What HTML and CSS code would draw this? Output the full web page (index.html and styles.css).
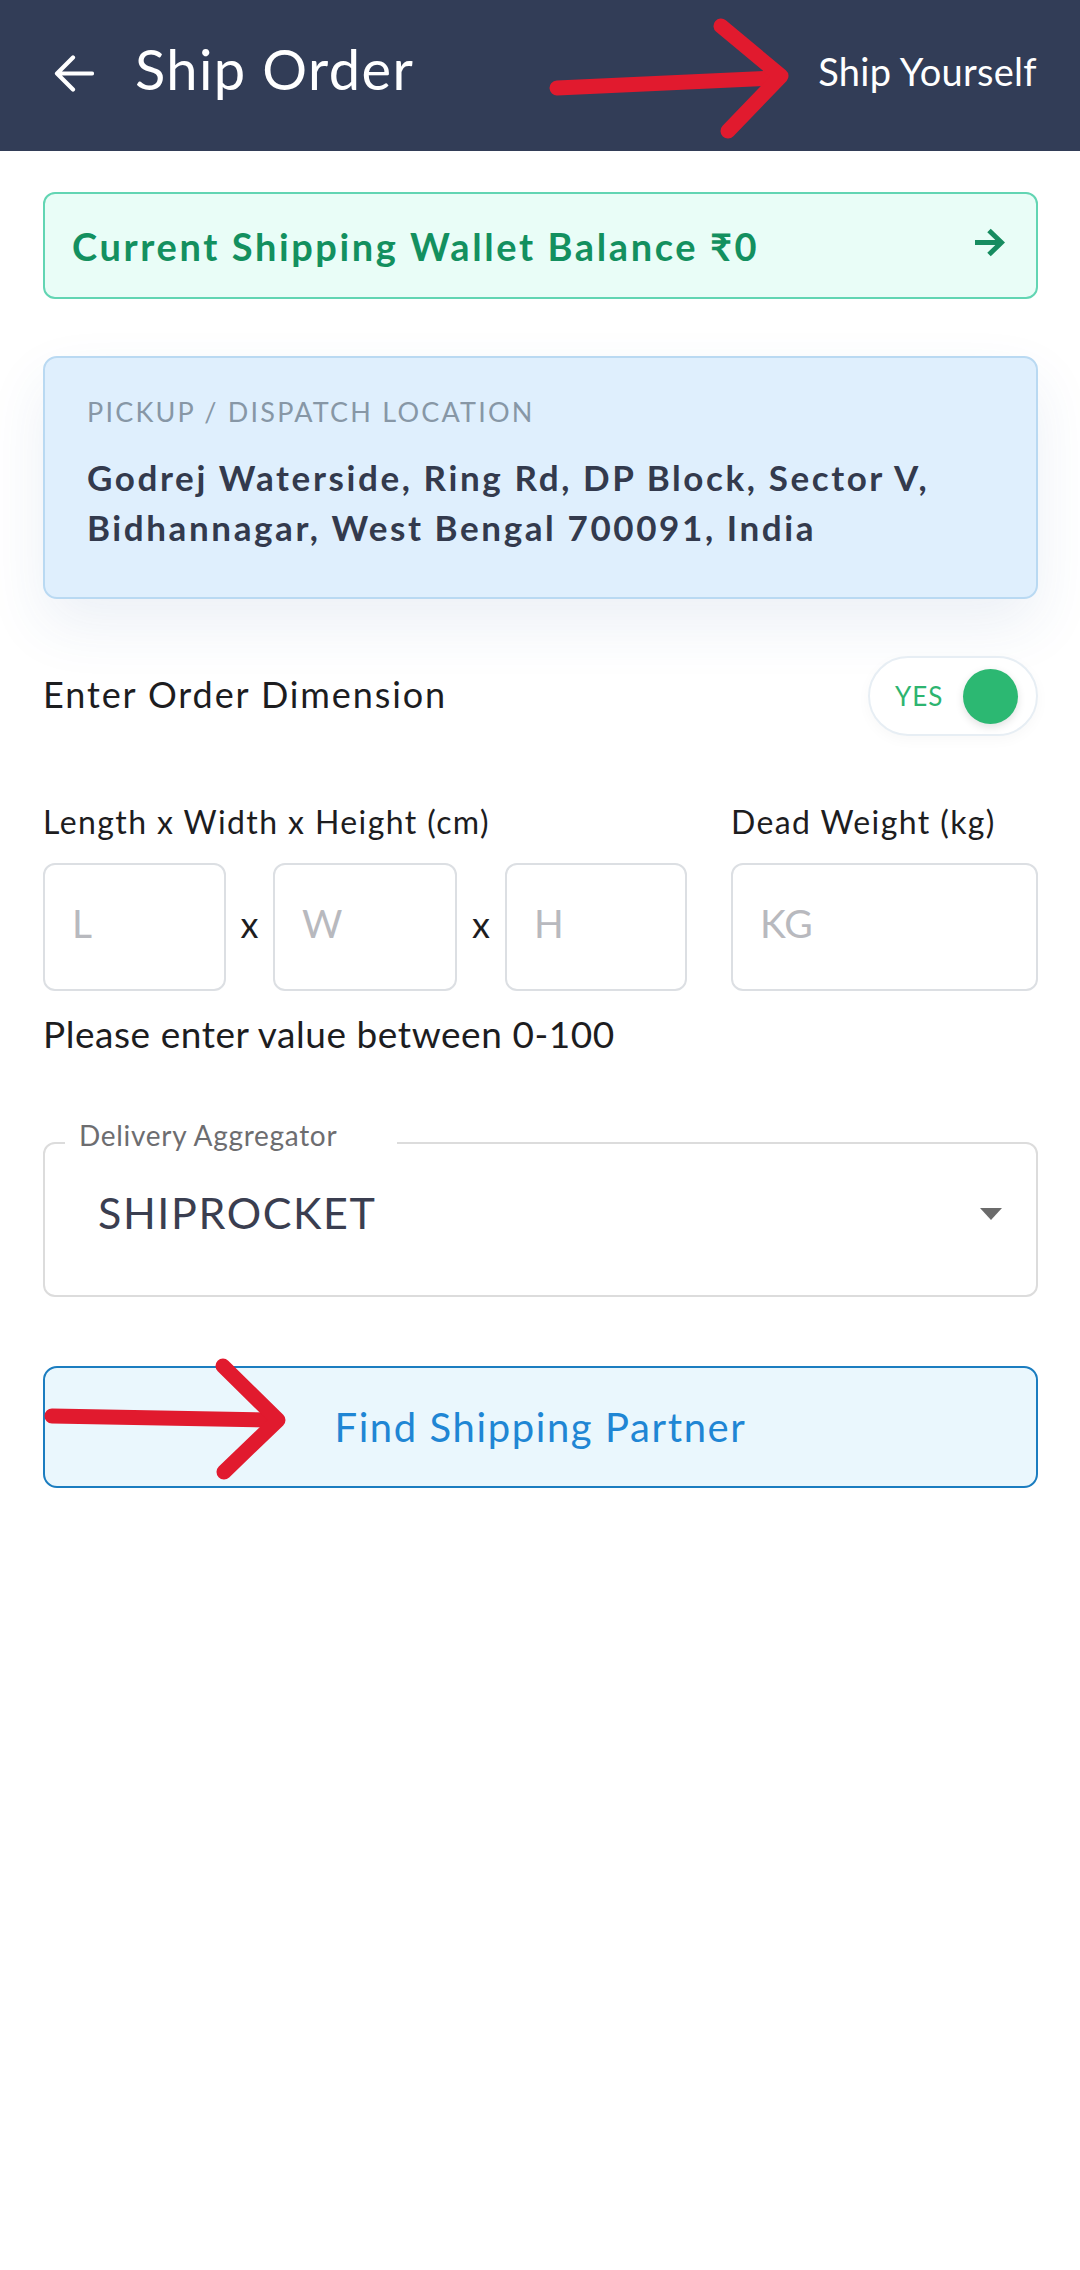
FILE: index.html
```html
<!DOCTYPE html>
<html lang="en">
<head>
<meta charset="utf-8">
<title>Ship Order</title>
<link rel="stylesheet" href="styles.css">
</head>
<body>
<div class="screen">
  <header class="appbar">
    <svg class="back-icon" viewBox="0 0 40 40" width="40" height="40" aria-hidden="true">
      <path d="M38 19.5H4 M19 3.5 L3 19.5 L19 35.5" fill="none" stroke="#fff" stroke-width="4.2" stroke-linecap="round" stroke-linejoin="round"/>
    </svg>
    <h1 class="title">Ship Order</h1>
    <span class="action">Ship Yourself</span>
  </header>

  <main class="content">
    <div class="wallet-card">
      <span class="wallet-text">Current Shipping Wallet Balance ₹0</span>
      <svg class="wallet-arrow" viewBox="0 0 32 30" width="32" height="30" aria-hidden="true">
        <path d="M2 14.5H28 M16 2.5 L28.5 14.5 L16 26.5" fill="none" stroke="#178c60" stroke-width="5" stroke-linejoin="miter"/>
      </svg>
    </div>

    <section class="pickup-card">
      <div class="pickup-label">PICKUP / DISPATCH LOCATION</div>
      <div class="pickup-address">Godrej Waterside, Ring Rd, DP Block, Sector V,<br>Bidhannagar, West Bengal 700091, India</div>
    </section>

    <div class="dimension-row">
      <span class="dimension-title">Enter Order Dimension</span>
      <div class="toggle">
        <span class="toggle-text">YES</span>
        <span class="toggle-knob"></span>
      </div>
    </div>

    <div class="dims-grid">
      <div class="field-label lwh-label">Length x Width x Height (cm)</div>
      <div class="field-label weight-label">Dead Weight (kg)</div>
      <div class="box">L</div>
      <div class="times">x</div>
      <div class="box">W</div>
      <div class="times">x</div>
      <div class="box">H</div>
      <div class="spacer"></div>
      <div class="box">KG</div>
    </div>

    <p class="hint">Please enter value between 0-100</p>

    <fieldset class="select-field">
      <legend class="select-legend">Delivery Aggregator</legend>
      <div class="select-row">
        <span class="select-value">SHIPROCKET</span>
        <svg class="select-caret" viewBox="0 0 22 12" width="22" height="12" aria-hidden="true">
          <path d="M0 0H22L11 12Z" fill="#6b6b6b"/>
        </svg>
      </div>
    </fieldset>

    <button class="find-btn">Find Shipping Partner</button>
  </main>

  <svg class="annotations" viewBox="0 0 1080 1500" width="1080" height="1500" aria-hidden="true">
    <g fill="none" stroke="#e11a2e" stroke-width="15" stroke-linecap="round" stroke-linejoin="round">
      <path d="M557 88 L774 78"/>
      <path d="M721 26 L781 76 L728 131"/>
      <path d="M52 1416 L272 1420"/>
      <path d="M223 1366 L278 1420 L224 1472"/>
    </g>
  </svg>
</div>
</body>
</html>
```

FILE: styles.css
```css
* { box-sizing: border-box; }

html, body {
  margin: 0;
  padding: 0;
  background: #ffffff;
}

body {
  font-family: Lato, "Open Sans", "Liberation Sans", sans-serif;
  color: #1d1d1f;
}

.screen {
  position: relative;
  width: 1080px;
  min-height: 2270px;
  background: #ffffff;
}

/* ---------- App bar ---------- */
.appbar {
  height: 151px;
  background: #323d57;
  display: flex;
  align-items: center;
  padding: 0 43px 0 54px;
}

.back-icon {
  display: block;
  flex: none;
  margin-top: -4px;
}

.title {
  margin: 0 0 0 41px;
  font-size: 56px;
  font-weight: 400;
  color: #ffffff;
  letter-spacing: 1.4px;
  line-height: 60px;
  margin-top: -13px;
}

.action {
  margin-left: auto;
  font-size: 38px;
  color: #ffffff;
  letter-spacing: 0.3px;
  line-height: 44px;
  margin-top: -9px;
}

/* ---------- Content ---------- */
.content {
  padding: 41px 42px 0 43px;
}

.wallet-card {
  height: 107px;
  border: 2px solid #62d5b3;
  border-radius: 12px;
  background: #e9fdf7;
  display: flex;
  align-items: center;
  justify-content: space-between;
  padding: 0 31px 0 27px;
}

.wallet-text {
  font-size: 38px;
  font-weight: 700;
  color: #13905f;
  letter-spacing: 2.6px;
  line-height: 44px;
}

.wallet-arrow {
  display: block;
  flex: none;
  margin-top: -6px;
}

.pickup-card {
  margin-top: 57px;
  height: 243px;
  background: #dfeffd;
  border: 2px solid #b9d9f2;
  border-radius: 14px;
  padding: 38px 20px 0 42px;
  box-shadow: 0 26px 60px rgba(40, 90, 150, 0.09);
}

.pickup-label {
  font-size: 27px;
  line-height: 32px;
  color: #8797a6;
  letter-spacing: 2.2px;
}

.pickup-address {
  margin-top: 24px;
  font-size: 35px;
  line-height: 50px;
  font-weight: 700;
  color: #333a4d;
  letter-spacing: 2.6px;
  white-space: nowrap;
}

.dimension-row {
  margin-top: 57px;
  display: flex;
  align-items: center;
  justify-content: space-between;
}

.dimension-title {
  font-size: 36px;
  line-height: 44px;
  color: #1d1d1f;
  letter-spacing: 1.9px;
  margin-top: -5px;
}

.toggle {
  width: 170px;
  height: 80px;
  border: 2px solid #e7eef4;
  border-radius: 40px;
  background: #ffffff;
  display: flex;
  align-items: center;
  padding: 0 16px 0 25px;
  gap: 20px;
  box-shadow: 0 4px 14px rgba(0, 0, 0, 0.03);
}

.toggle-text {
  font-size: 26px;
  line-height: 30px;
  color: #2db46f;
  letter-spacing: 1px;
}

.toggle-knob {
  width: 55px;
  height: 55px;
  border-radius: 50%;
  background: #2cb872;
  box-shadow: 0 3px 8px rgba(0, 0, 0, 0.12);
}

/* ---------- Dimensions ---------- */
.dims-grid {
  margin-top: 66px;
  display: grid;
  grid-template-columns: 183px 47px 184px 48px 182px 44px 307px;
  grid-template-rows: 40px 128px;
  row-gap: 21px;
}

.field-label {
  font-size: 32px;
  line-height: 40px;
  color: #1d1d1f;
  letter-spacing: 1.4px;
  white-space: nowrap;
}

.lwh-label { grid-column: 1 / 6; }
.weight-label { grid-column: 7 / 8; }

.box {
  border: 2px solid #dcdfe3;
  border-radius: 12px;
  background: #ffffff;
  display: flex;
  align-items: center;
  padding: 0 0 8px 27px;
  font-size: 39px;
  color: #b8b9be;
}

.times {
  display: flex;
  align-items: center;
  justify-content: center;
  font-size: 36px;
  color: #1d1d1f;
  padding-bottom: 6px;
}

.hint {
  margin: 21px 0 0;
  font-size: 37px;
  line-height: 44px;
  color: #1d1d1f;
  letter-spacing: 0.55px;
}

/* ---------- Select field ---------- */
.select-field {
  margin: 62px 0 0;
  padding: 0;
  border: 2px solid #dcdcdc;
  border-radius: 12px;
  min-width: 0;
}

.select-legend {
  margin-left: 20px;
  padding: 0 60px 16px 14px;
  font-size: 28px;
  line-height: 34px;
  color: #6d6d70;
  letter-spacing: 0.7px;
}

.select-row {
  display: flex;
  align-items: center;
  justify-content: space-between;
  padding: 19px 34px 56px 53px;
}

.select-value {
  font-size: 43px;
  line-height: 52px;
  color: #3a3e50;
  letter-spacing: 1.6px;
}

.select-caret {
  display: block;
  margin-top: 2px;
}

/* ---------- Button ---------- */
.find-btn {
  display: block;
  width: 100%;
  margin-top: 69px;
  height: 122px;
  border: 2px solid #1b7dc0;
  border-radius: 14px;
  background: #eaf7fd;
  font-family: Lato, "Open Sans", "Liberation Sans", sans-serif;
  font-size: 40px;
  color: #1f86d4;
  letter-spacing: 1.6px;
  padding: 0;
}

/* ---------- Annotation overlay (hand-drawn red arrows) ---------- */
.annotations {
  position: absolute;
  left: 0;
  top: 0;
  pointer-events: none;
}
```
